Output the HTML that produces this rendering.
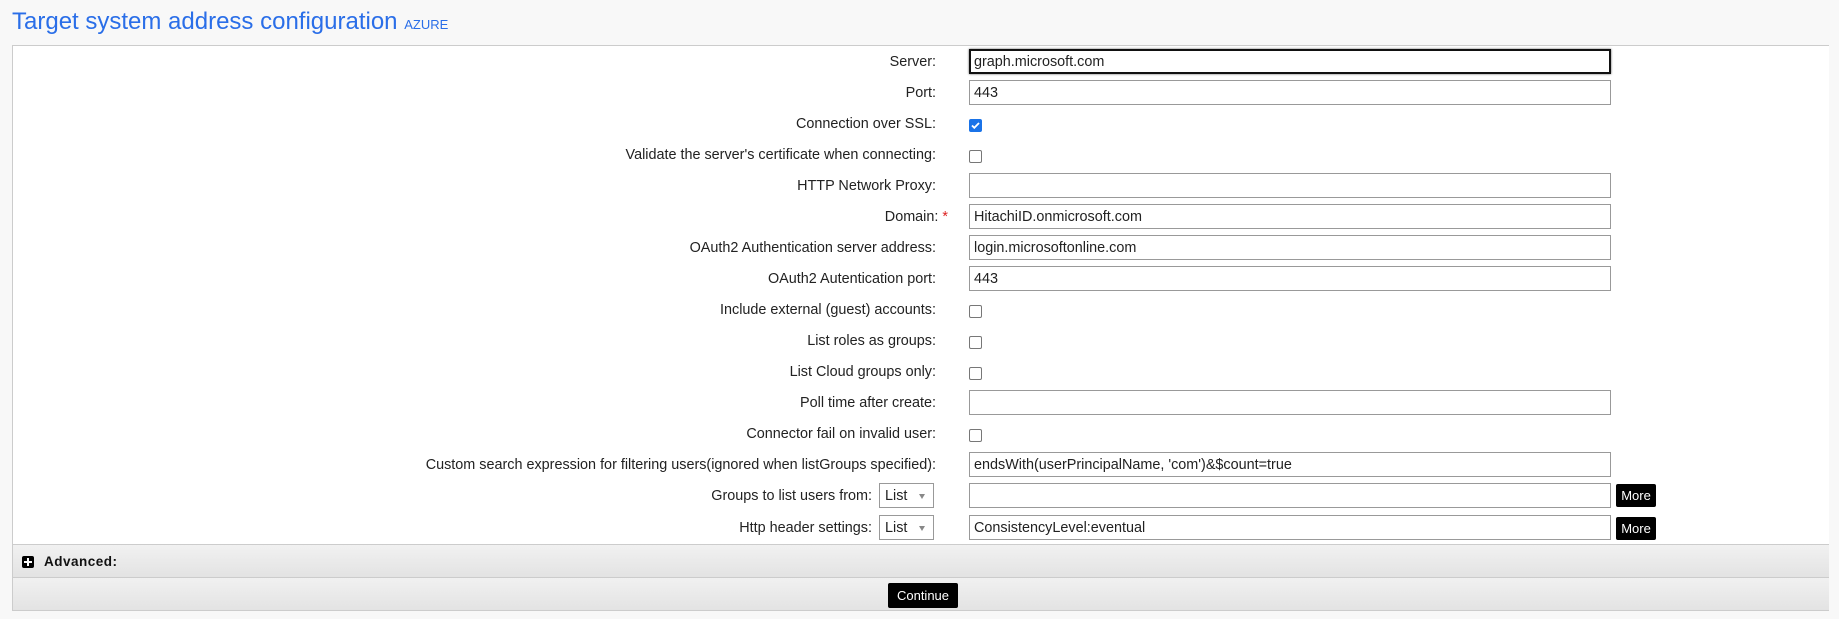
<!DOCTYPE html>
<html><head><meta charset="utf-8"><style>
*{box-sizing:border-box;margin:0;padding:0}
body{width:1839px;height:619px;background:#f8f8f8;font-family:"Liberation Sans",Arial,sans-serif;font-size:14.4px;color:#222;position:relative;overflow:hidden}
.title{position:absolute;left:12px;top:8px;font-size:24px;color:#2a6ee8}
.title small{font-size:13px}
.box{position:absolute;left:12px;top:45px;width:1817px;height:500px;background:#fff;border-top:1px solid #ccc;border-left:1px solid #ccc}
.lbl{position:absolute;right:903px;text-align:right;white-space:nowrap;line-height:16px}
.inp{position:absolute;left:969px;width:642px;height:25px;border:1px solid #999;background:#fff;padding-left:4px;display:flex;align-items:center;font-size:14.4px;line-height:16px}
.cb{position:absolute;left:969px;width:13px;height:13px;border:1px solid #777;border-radius:2px;background:#fff}
.cb.on{background:#1a73e8;border-color:#1a73e8}
.sel{position:absolute;left:879px;width:55px;height:25px;border:1px solid #999;background:#fff;padding-left:5px;display:flex;align-items:center;line-height:16px}
.sel:after{content:"";position:absolute;right:8px;top:10px;border-left:3.5px solid transparent;border-right:3.5px solid transparent;border-top:5px solid #888}
.more{position:absolute;left:1616px;width:40px;height:23px;background:#000;color:#fff;border-radius:2px;font-size:13px;line-height:23px;text-align:center}
.bar{position:absolute;left:12px;width:1817px;border:1px solid #ccc;border-right:none;background:linear-gradient(#f1f1f1,#e3e3e3)}
.req{color:#d22}
</style></head><body>
<div class="title">Target system address configuration <small>AZURE</small></div>
<div class="box"></div>

<div class="lbl" style="top:54px">Server:</div>
<div class="inp" style="top:49px;border:2px solid #111;box-shadow:0 0 2px #555;padding-left:3px">graph.microsoft.com</div>
<div class="lbl" style="top:85px">Port:</div>
<div class="inp" style="top:80px">443</div>
<div class="lbl" style="top:116px">Connection over SSL:</div>
<div class="cb on" style="top:119px"><svg width="11" height="11" viewBox="0 0 11 11" style="position:absolute;left:0;top:0"><path d="M2 5.5l2.3 2.3L9 3" stroke="#fff" stroke-width="1.8" fill="none"/></svg></div>
<div class="lbl" style="top:147px">Validate the server's certificate when connecting:</div>
<div class="cb" style="top:150px"></div>
<div class="lbl" style="top:178px">HTTP Network Proxy:</div>
<div class="inp" style="top:173px"></div>
<div class="lbl" style="top:209px;right:891px">Domain: <span class="req">*</span></div>
<div class="inp" style="top:204px">HitachiID.onmicrosoft.com</div>
<div class="lbl" style="top:240px">OAuth2 Authentication server address:</div>
<div class="inp" style="top:235px">login.microsoftonline.com</div>
<div class="lbl" style="top:271px">OAuth2 Autentication port:</div>
<div class="inp" style="top:266px">443</div>
<div class="lbl" style="top:302px">Include external (guest) accounts:</div>
<div class="cb" style="top:305px"></div>
<div class="lbl" style="top:333px">List roles as groups:</div>
<div class="cb" style="top:336px"></div>
<div class="lbl" style="top:364px">List Cloud groups only:</div>
<div class="cb" style="top:367px"></div>
<div class="lbl" style="top:395px">Poll time after create:</div>
<div class="inp" style="top:390px"></div>
<div class="lbl" style="top:426px">Connector fail on invalid user:</div>
<div class="cb" style="top:429px"></div>
<div class="lbl" style="top:457px">Custom search expression for filtering users(ignored when listGroups specified):</div>
<div class="inp" style="top:452px">endsWith(userPrincipalName, 'com')&amp;$count=true</div>
<div class="lbl" style="top:488px;right:967px">Groups to list users from:</div>
<div class="sel" style="top:483px">List</div>
<div class="inp" style="top:483px"></div>
<div class="more" style="top:484px">More</div>
<div class="lbl" style="top:520px;right:967px">Http header settings:</div>
<div class="sel" style="top:515px">List</div>
<div class="inp" style="top:515px">ConsistencyLevel:eventual</div>
<div class="more" style="top:517px">More</div>

<div class="bar" style="top:544px;height:34px">
<div style="position:absolute;left:9px;top:11px;width:12px;height:12px;background:#000;border-radius:2px"><div style="position:absolute;left:5px;top:2px;width:2px;height:8px;background:#fff"></div><div style="position:absolute;left:2px;top:5px;width:8px;height:2px;background:#fff"></div></div>
<div style="position:absolute;left:31px;top:9px;font-weight:bold;font-size:13.5px;letter-spacing:0.5px;color:#111">Advanced:</div>
</div>
<div class="bar" style="top:577px;height:34px">
<div style="position:absolute;left:875px;top:5px;width:70px;height:25px;background:#000;color:#fff;border-radius:2px;font-size:13px;line-height:25px;text-align:center">Continue</div>
</div>
</body></html>
